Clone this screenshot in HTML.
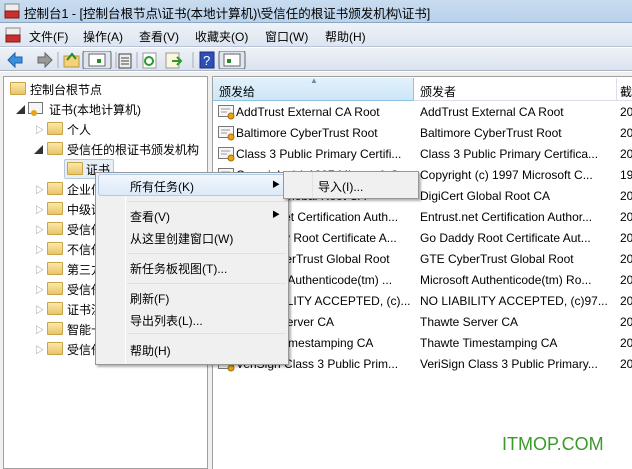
<!DOCTYPE html>
<html><head><meta charset="utf-8"><style>
*{margin:0;padding:0;box-sizing:border-box}
body{width:632px;height:469px;overflow:hidden;background:#fff;font-family:"Liberation Sans","Noto Sans CJK SC",sans-serif;font-size:12px;color:#000;position:relative}
.a{position:absolute;white-space:nowrap}
.fold{position:absolute;width:16px;height:13px;background:linear-gradient(#fbe9a8,#e8c46a);border:1px solid #c9a548;border-radius:1px}
.cert{position:absolute;width:16px;height:14px}
.tri{position:absolute;font-size:9px;color:#888}
.r{position:absolute;left:236px;width:176px;overflow:hidden;white-space:nowrap;height:21px;line-height:21px}
.r2{position:absolute;left:420px;width:195px;overflow:hidden;white-space:nowrap;height:21px;line-height:21px}
.r3{position:absolute;left:620px;height:21px;line-height:21px}
.mi{position:absolute;left:130px}
</style></head><body>
<!-- title bar -->
<div class="a" style="left:0;top:0;width:632px;height:23px;background:linear-gradient(#c9dcf0,#b9d1ea);border-bottom:1px solid #8aa6c6"></div>
<svg class="a" style="left:4px;top:3px" width="16" height="16"><rect x="1" y="1" width="14" height="7" fill="#eee" stroke="#888"/><rect x="1" y="8" width="14" height="7" fill="#c8312b" stroke="#7a1a16"/></svg>
<div class="a" style="left:24px;top:3px;font-size:12.5px">控制台1 - [控制台根节点\证书(本地计算机)\受信任的根证书颁发机构\证书]</div>
<!-- menu bar -->
<div class="a" style="left:0;top:23px;width:632px;height:24px;background:linear-gradient(#eef2f8,#dde5f1);border-bottom:1px solid #b8c4d6"></div>
<svg class="a" style="left:5px;top:27px" width="16" height="16"><rect x="1" y="1" width="14" height="7" fill="#eee" stroke="#888"/><rect x="1" y="8" width="14" height="7" fill="#c8312b" stroke="#7a1a16"/></svg>
<div class="a" style="left:29px;top:28px">文件(F)</div>
<div class="a" style="left:83px;top:28px">操作(A)</div>
<div class="a" style="left:139px;top:28px">查看(V)</div>
<div class="a" style="left:195px;top:28px">收藏夹(O)</div>
<div class="a" style="left:265px;top:28px">窗口(W)</div>
<div class="a" style="left:325px;top:28px">帮助(H)</div>
<!-- toolbar -->
<div class="a" style="left:0;top:48px;width:632px;height:23px;background:linear-gradient(#eef2f8,#dce3ef);border-bottom:1px solid #a9b4c4"></div>
<svg class="a" style="left:6px;top:51px" width="240" height="18">
<path d="M2 9 L9 2 V6 H16 V12 H9 V16 Z" fill="#3d8fdc" stroke="#1f5fa8"/>
<path d="M46 9 L39 2 V6 H32 V12 H39 V16 Z" fill="#9a9a9a" stroke="#666"/>
<line x1="52" y1="1" x2="52" y2="17" stroke="#aab"/>
<rect x="58" y="5" width="15" height="11" fill="#f4d27a" stroke="#b9973f"/><path d="M61 9 L66 3 L70 8" stroke="#2a8a2a" stroke-width="2" fill="none"/>
<rect x="77" y="0" width="28" height="18" fill="#dfe6ee" stroke="#5c6673" rx="2"/><rect x="83" y="3" width="16" height="12" fill="#fff" stroke="#666"/><rect x="91" y="8" width="4" height="4" fill="#2a8a2a"/>
<line x1="110" y1="1" x2="110" y2="17" stroke="#aab"/>
<rect x="113" y="3" width="12" height="14" fill="#eee" stroke="#444"/><line x1="115" y1="7" x2="123" y2="7" stroke="#444"/><line x1="115" y1="10" x2="123" y2="10" stroke="#444"/><line x1="115" y1="13" x2="123" y2="13" stroke="#444"/>
<line x1="131" y1="1" x2="131" y2="17" stroke="#aab"/>
<rect x="137" y="2" width="13" height="15" fill="#fff" stroke="#999"/><circle cx="143" cy="10" r="4" fill="none" stroke="#2a9a2a" stroke-width="2"/>
<rect x="160" y="2" width="13" height="15" fill="#fbf6dc" stroke="#999"/><path d="M166 10 H175 M171 6 L175 10 L171 14" stroke="#2a9a2a" stroke-width="2" fill="none"/>
<line x1="187" y1="1" x2="187" y2="17" stroke="#aab"/>
<rect x="194" y="1" width="14" height="16" fill="#2d4fb8" stroke="#1a2f7a"/><text x="197" y="14" fill="#fff" font-size="13" font-family="Liberation Sans">?</text>
<rect x="213" y="0" width="26" height="18" fill="#dfe6ee" stroke="#5c6673" rx="2"/><rect x="218" y="3" width="16" height="12" fill="#fff" stroke="#666"/><rect x="221" y="8" width="4" height="4" fill="#2a8a2a"/>
</svg>
<!-- body bg -->
<div class="a" style="left:0;top:72px;width:632px;height:397px;background:#f0f0f0"></div>
<!-- left pane -->
<div class="a" style="left:3px;top:76px;width:205px;height:393px;background:#fff;border:1px solid #a0a0a0"></div>
<!-- right pane -->
<div class="a" style="left:212px;top:76px;width:420px;height:393px;background:#fff;border-left:1px solid #a0a0a0;border-top:1px solid #a0a0a0"></div>
<!-- header -->
<div class="a" style="left:213px;top:78px;width:201px;height:23px;background:linear-gradient(#e3f1fb,#cde6f7);border-right:1px solid #8ec4e8;border-bottom:1px solid #8ec4e8"></div>
<div class="a" style="left:414px;top:78px;width:203px;height:23px;background:#fff;border-right:1px solid #dde;border-bottom:1px solid #dde"></div>
<div class="a" style="left:617px;top:78px;width:15px;height:23px;background:#fff;border-bottom:1px solid #dde"></div>
<div class="a" style="left:310px;top:76px;font-size:8px;color:#6a8bab">▲</div>
<div class="a" style="left:219px;top:83px">颁发给</div>
<div class="a" style="left:420px;top:83px">颁发者</div>
<div class="a" style="left:620px;top:83px">截</div>
<!-- rows -->
<div id="rows"></div>
<div class="r" style="top:102px">AddTrust External CA Root</div><div class="r2" style="top:102px">AddTrust External CA Root</div><div class="r3" style="top:102px">20</div>
<div class="r" style="top:123px">Baltimore CyberTrust Root</div><div class="r2" style="top:123px">Baltimore CyberTrust Root</div><div class="r3" style="top:123px">20</div>
<div class="r" style="top:144px">Class 3 Public Primary Certifi...</div><div class="r2" style="top:144px">Class 3 Public Primary Certifica...</div><div class="r3" style="top:144px">20</div>
<div class="r" style="top:165px">Copyright (c) 1997 Microsoft C...</div><div class="r2" style="top:165px">Copyright (c) 1997 Microsoft C...</div><div class="r3" style="top:165px">19</div>
<div class="r" style="top:186px">DigiCert Global Root CA</div><div class="r2" style="top:186px">DigiCert Global Root CA</div><div class="r3" style="top:186px">20</div>
<div class="r" style="top:207px">Entrust.net Certification Auth...</div><div class="r2" style="top:207px">Entrust.net Certification Author...</div><div class="r3" style="top:207px">20</div>
<div class="r" style="top:228px">Go Daddy Root Certificate A...</div><div class="r2" style="top:228px">Go Daddy Root Certificate Aut...</div><div class="r3" style="top:228px">20</div>
<div class="r" style="top:249px">GTE CyberTrust Global Root</div><div class="r2" style="top:249px">GTE CyberTrust Global Root</div><div class="r3" style="top:249px">20</div>
<div class="r" style="top:270px">Microsoft Authenticode(tm) ...</div><div class="r2" style="top:270px">Microsoft Authenticode(tm) Ro...</div><div class="r3" style="top:270px">20</div>
<div class="r" style="top:291px">NO LIABILITY ACCEPTED, (c)...</div><div class="r2" style="top:291px">NO LIABILITY ACCEPTED, (c)97...</div><div class="r3" style="top:291px">20</div>
<div class="r" style="top:312px">Thawte Server CA</div><div class="r2" style="top:312px">Thawte Server CA</div><div class="r3" style="top:312px">20</div>
<div class="r" style="top:333px">Thawte Timestamping CA</div><div class="r2" style="top:333px">Thawte Timestamping CA</div><div class="r3" style="top:333px">20</div>
<div class="r" style="top:354px">VeriSign Class 3 Public Prim...</div><div class="r2" style="top:354px">VeriSign Class 3 Public Primary...</div><div class="r3" style="top:354px">20</div>
<svg class="a" style="left:218px;top:104px" width="18" height="270">
<defs><g id="c"><rect x="0.5" y="1.5" width="15" height="11" fill="#f6f6f6" stroke="#777"/><line x1="3" y1="5" x2="12" y2="5" stroke="#999"/><line x1="3" y1="8" x2="9" y2="8" stroke="#999"/><circle cx="13" cy="12" r="3" fill="#e8a317" stroke="#a86d0a"/></g></defs>
<use href="#c" y="0"/><use href="#c" y="21"/><use href="#c" y="42"/><use href="#c" y="63"/><use href="#c" y="84"/><use href="#c" y="105"/><use href="#c" y="126"/><use href="#c" y="147"/><use href="#c" y="168"/><use href="#c" y="189"/><use href="#c" y="210"/><use href="#c" y="231"/><use href="#c" y="252"/>
</svg>
<!-- tree -->
<div class="fold" style="left:10px;top:82px"></div><div class="a" style="left:30px;top:81px">控制台根节点</div>
<div class="tri" style="left:16px;top:103px;color:#333">◢</div>
<svg class="a" style="left:28px;top:101px" width="16" height="16"><rect x="0.5" y="1.5" width="14" height="11" fill="#f6f6f6" stroke="#777"/><circle cx="6" cy="12" r="3" fill="#e8a317"/></svg>
<div class="a" style="left:49px;top:101px">证书(本地计算机)</div>
<div class="tri" style="left:35px;top:123px">▷</div><div class="fold" style="left:47px;top:122px"></div><div class="a" style="left:67px;top:121px">个人</div>
<div class="tri" style="left:34px;top:143px;color:#333">◢</div><div class="fold" style="left:47px;top:142px"></div><div class="a" style="left:67px;top:141px">受信任的根证书颁发机构</div>
<div class="a" style="left:64px;top:159px;width:50px;height:20px;background:#e6eef6;border:1px solid #b7c8dc;border-radius:2px"></div>
<div class="fold" style="left:67px;top:162px"></div><div class="a" style="left:86px;top:161px">证书</div>
<div class="tri" style="left:35px;top:183px">▷</div><div class="fold" style="left:47px;top:182px"></div><div class="a" style="left:67px;top:181px">企业信任</div>
<div class="tri" style="left:35px;top:203px">▷</div><div class="fold" style="left:47px;top:202px"></div><div class="a" style="left:67px;top:201px">中级证书</div>
<div class="tri" style="left:35px;top:223px">▷</div><div class="fold" style="left:47px;top:222px"></div><div class="a" style="left:67px;top:221px">受信任</div>
<div class="tri" style="left:35px;top:243px">▷</div><div class="fold" style="left:47px;top:242px"></div><div class="a" style="left:67px;top:241px">不信任</div>
<div class="tri" style="left:35px;top:263px">▷</div><div class="fold" style="left:47px;top:262px"></div><div class="a" style="left:67px;top:261px">第三方</div>
<div class="tri" style="left:35px;top:283px">▷</div><div class="fold" style="left:47px;top:282px"></div><div class="a" style="left:67px;top:281px">受信任</div>
<div class="tri" style="left:35px;top:303px">▷</div><div class="fold" style="left:47px;top:302px"></div><div class="a" style="left:67px;top:301px">证书注册</div>
<div class="tri" style="left:35px;top:323px">▷</div><div class="fold" style="left:47px;top:322px"></div><div class="a" style="left:67px;top:321px">智能卡</div>
<div class="tri" style="left:35px;top:343px">▷</div><div class="fold" style="left:47px;top:342px"></div><div class="a" style="left:67px;top:341px">受信任</div>
<!-- context menu -->
<div class="a" style="left:95px;top:172px;width:194px;height:193px;background:#f0f0f0;border:1px solid #979797;box-shadow:2px 2px 2px rgba(0,0,0,.3)"></div>
<div class="a" style="left:125px;top:173px;width:1px;height:191px;background:#e2e3e3;border-right:1px solid #fff"></div>
<div class="a" style="left:98px;top:174px;width:188px;height:22px;background:linear-gradient(#f2f7fd,#dbe9f8);border:1px solid #aecbea;border-radius:3px"></div>
<div class="a" style="left:127px;top:201px;width:159px;height:1px;background:#e0e0e0"></div>
<div class="a" style="left:127px;top:253px;width:159px;height:1px;background:#e0e0e0"></div>
<div class="a" style="left:127px;top:283px;width:159px;height:1px;background:#e0e0e0"></div>
<div class="a" style="left:127px;top:333px;width:159px;height:1px;background:#e0e0e0"></div>
<div class="mi" style="top:178px">所有任务(K)</div><div class="a" style="left:272px;top:179px;font-size:8px">▶</div>
<div class="mi" style="top:208px">查看(V)</div><div class="a" style="left:272px;top:209px;font-size:8px">▶</div>
<div class="mi" style="top:230px">从这里创建窗口(W)</div>
<div class="mi" style="top:260px">新任务板视图(T)...</div>
<div class="mi" style="top:290px">刷新(F)</div>
<div class="mi" style="top:312px">导出列表(L)...</div>
<div class="mi" style="top:342px">帮助(H)</div>
<!-- submenu -->
<div class="a" style="left:283px;top:171px;width:136px;height:28px;background:#f0f0f0;border:1px solid #979797;box-shadow:2px 2px 2px rgba(0,0,0,.3)"></div>
<div class="a" style="left:312px;top:172px;width:1px;height:26px;background:#e2e3e3"></div>
<div class="a" style="left:318px;top:178px">导入(I)...</div>
<!-- watermark -->
<div class="a" style="left:502px;top:434px;font-size:18px;color:#3a9a2a;font-family:'Liberation Sans',sans-serif">ITMOP.COM</div>
</body></html>
